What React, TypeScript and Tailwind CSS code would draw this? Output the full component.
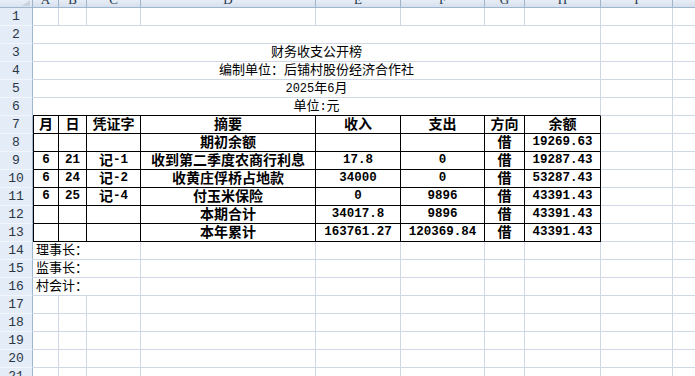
import React from "react";

type CellProps = {
  span?: number;
  text?: string;
  bold?: boolean;
  left?: boolean;
  rb?: boolean;
  bb?: boolean;
  lb?: boolean;
  size?: "t" | "n";
};

function Rich({ text, bold }: { text: string; bold?: boolean }) {
  const parts = text.split(/([\x00-\x7f]+)/).filter((p) => p.length > 0);
  return (
    <>
      {parts.map((p, i) =>
        /^[\x00-\x7f]+$/.test(p) ? (
          <span key={i} className={bold ? "text-[12.5px]" : "text-[12px]"}>
            {p}
          </span>
        ) : (
          <span key={i} className={bold ? "text-[14px]" : "text-[13px]"}>
            {p}
          </span>
        )
      )}
    </>
  );
}

function Cell({ span = 1, text, bold, left, rb, bb, lb }: CellProps) {
  const cls = [
    "h-[18px] box-border flex items-center whitespace-nowrap overflow-visible text-black leading-none",
    "border-r border-b",
    span === 8 ? "col-span-8" : span === 3 ? "col-span-3" : "",
    rb ? "border-r-black" : "border-r-[#d0d7e5]",
    bb ? "border-b-black" : "border-b-[#d0d7e5]",
    lb ? "border-l border-l-black" : "",
    left ? "justify-start pl-[3px]" : "justify-center",
    bold ? "font-bold" : "font-normal",
  ].join(" ");
  return <div className={cls}>{text ? <Rich text={text} bold={bold} /> : null}</div>;
}

function RowHead({ n }: { n: number }) {
  return (
    <div className="h-[18px] box-border bg-[#e4ecf7] border-r border-r-[#9eb6ce] border-b border-b-[#f3f6fb] flex items-center justify-center text-[13px] text-[#2a3646] font-normal">
      {n}
    </div>
  );
}

const letters = ["A", "B", "C", "D", "E", "F", "G", "H", "I", ""];

export default function App() {
  const rows: React.ReactNode[] = [];

  // Header
  rows.push(
    <div
      key="corner"
      className="h-[8px] box-border bg-gradient-to-b from-[#e9eff7] to-[#d8e2ef] border-r border-r-[#9eb6ce] border-b border-b-[#9eb6ce] relative overflow-hidden"
    >
      <svg className="absolute right-[2px] bottom-[1px]" width="10" height="6" viewBox="0 0 10 6">
        <polygon points="10,0 10,6 2,6" fill="#c9d3e0" />
      </svg>
    </div>
  );
  letters.forEach((l, i) =>
    rows.push(
      <div
        key={"h" + i}
        className="h-[8px] box-border bg-gradient-to-b from-[#e6edf6] to-[#d7e0ed] border-r border-r-[#9eb6ce] border-b border-b-[#9eb6ce] flex items-end justify-center overflow-hidden"
      >
        <span className="font-['Liberation_Serif',serif] text-[13px] leading-none text-[#27364a] translate-y-[-1px]">
          {l}
        </span>
      </div>
    )
  );

  const plainRest = (key: string, fromCol: number) => {
    const out: React.ReactNode[] = [];
    for (let c = fromCol; c < 10; c++) out.push(<Cell key={key + "_" + c} />);
    return out;
  };

  // Row 1
  rows.push(<RowHead key="r1" n={1} />);
  rows.push(...plainRest("r1", 0));

  // Rows 2-6 merged
  const titles = ["", "财务收支公开榜", "编制单位：后铺村股份经济合作社", "2025年6月", "单位:元"];
  titles.forEach((t, i) => {
    const n = i + 2;
    rows.push(<RowHead key={"rh" + n} n={n} />);
    rows.push(<Cell key={"m" + n} span={8} text={t} bb={n === 6} />);
    rows.push(...plainRest("r" + n, 8));
  });

  // Table rows 7-13
  const table: string[][] = [
    ["月", "日", "凭证字", "摘要", "收入", "支出", "方向", "余额"],
    ["", "", "", "期初余额", "", "", "借", "19269.63"],
    ["6", "21", "记-1", "收到第二季度农商行利息", "17.8", "0", "借", "19287.43"],
    ["6", "24", "记-2", "收黄庄俘桥占地款", "34000", "0", "借", "53287.43"],
    ["6", "25", "记-4", "付玉米保险", "0", "9896", "借", "43391.43"],
    ["", "", "", "本期合计", "34017.8", "9896", "借", "43391.43"],
    ["", "", "", "本年累计", "163761.27", "120369.84", "借", "43391.43"],
  ];
  table.forEach((r, i) => {
    const n = i + 7;
    rows.push(<RowHead key={"rh" + n} n={n} />);
    r.forEach((t, c) =>
      rows.push(<Cell key={"t" + n + "_" + c} text={t} bold rb bb lb={c === 0} />)
    );
    rows.push(...plainRest("r" + n, 8));
  });

  // Rows 14-16
  ["理事长：", "监事长：", "村会计："].forEach((t, i) => {
    const n = i + 14;
    rows.push(<RowHead key={"rh" + n} n={n} />);
    rows.push(<Cell key={"s" + n} span={3} text={t} left />);
    rows.push(...plainRest("r" + n, 3));
  });

  // Rows 17-21
  for (let n = 17; n <= 21; n++) {
    rows.push(<RowHead key={"rh" + n} n={n} />);
    rows.push(...plainRest("r" + n, 0));
  }

  return (
    <div className="w-[695px] h-[376px] overflow-hidden bg-white font-['Liberation_Mono','Noto_Sans_CJK_SC',monospace]">
      <div className="grid grid-cols-[33px_26px_28px_54px_175px_85px_84px_40px_76px_72px_40px] w-[735px]">
        {rows}
      </div>
    </div>
  );
}
